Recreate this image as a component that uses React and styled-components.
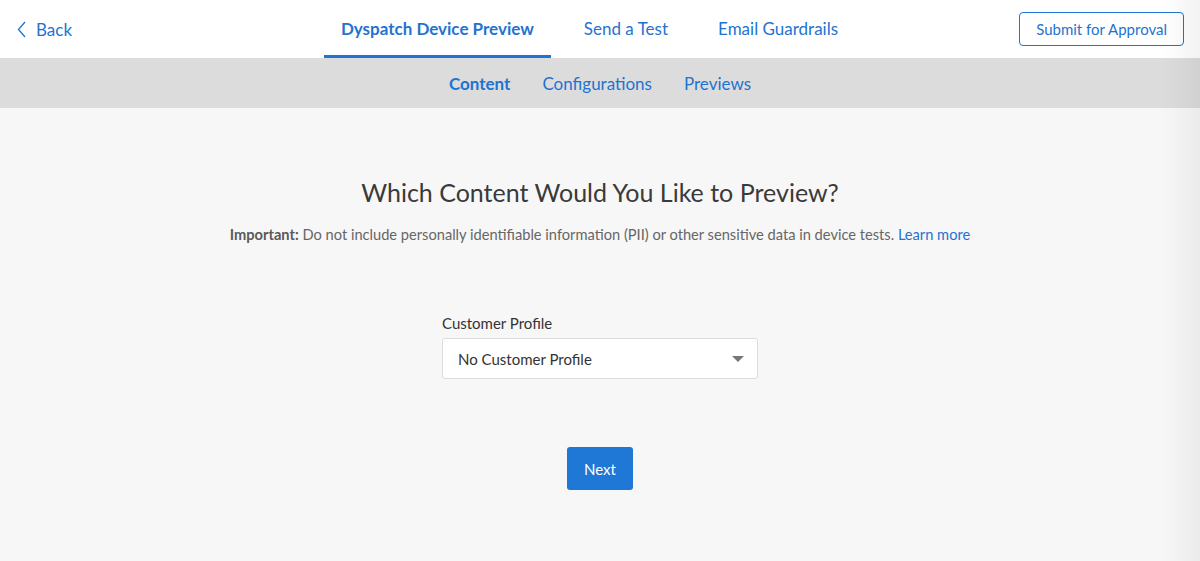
import React from "react";
import styled, { createGlobalStyle } from "styled-components";

const Global = createGlobalStyle`
  html, body { margin: 0; padding: 0; }
  body { font-family: Lato, "Noto Sans", sans-serif; background: #f7f7f7; }
  * { box-sizing: border-box; }
`;

const BLUE = "#1f73d1";

const Page = styled.div`
  position: relative;
  width: 1200px;
  height: 561px;
  background: #f7f7f7;
  overflow: hidden;
`;

const Header = styled.header`
  height: 58px;
  background: #fff;
  display: grid;
  grid-template-columns: 1fr auto 1fr;
  align-items: stretch;
  padding: 0 16px 0 17px;
`;

const BackLink = styled.a`
  display: flex;
  align-items: center;
  gap: 9px;
  color: ${BLUE};
  font-size: 17px;
  text-decoration: none;
  justify-self: start;
`;

const Tabs = styled.nav`
  display: flex;
  gap: 16px;
  align-items: stretch;
  margin-right: 22px;
`;

const Tab = styled.a`
  display: flex;
  align-items: center;
  padding: 2px 17px 0;
  font-size: 17px;
  color: ${BLUE};
  font-weight: ${(p) => (p.$active ? 700 : 400)};
  border-bottom: 3px solid ${(p) => (p.$active ? BLUE : "transparent")};
  text-decoration: none;
  white-space: nowrap;
`;

const Right = styled.div`
  display: flex;
  align-items: center;
  justify-content: flex-end;
`;

const OutlineButton = styled.button`
  height: 34px;
  padding: 0 16px;
  border: 1px solid ${BLUE};
  border-radius: 4px;
  background: #fff;
  color: ${BLUE};
  font-family: Lato, sans-serif;
  font-size: 15px;
  margin-top: -1px;
`;

const SubNav = styled.nav`
  height: 50px;
  background: #dcdcdc;
  display: flex;
  justify-content: center;
  align-items: center;
  gap: 32px;
`;

const SubTab = styled.a`
  font-size: 17px;
  color: ${BLUE};
  font-weight: ${(p) => (p.$active ? 700 : 400)};
  text-decoration: none;
`;

const Main = styled.main`
  display: flex;
  flex-direction: column;
  align-items: center;
  padding-top: 69px;
`;

const Title = styled.h1`
  margin: 0;
  font-size: 25px;
  font-weight: 400;
  color: #3a3a3a;
`;

const Note = styled.p`
  margin: 19px 0 0;
  font-size: 14.65px;
  color: #666;
  strong { font-weight: 700; color: #5a5a5a; }
  a { color: ${BLUE}; text-decoration: none; }
`;

const Field = styled.div`
  margin-top: 71px;
  width: 316px;
  display: flex;
  flex-direction: column;
  gap: 6px;
`;

const Label = styled.label`
  font-size: 15px;
  color: #333;
`;

const Select = styled.div`
  height: 41px;
  background: #fff;
  border: 1px solid #dcdcdc;
  border-radius: 3px;
  display: flex;
  align-items: center;
  justify-content: space-between;
  padding: 0 13px 0 15px;
  font-size: 15px;
  color: #333;
`;

const Caret = styled.span`
  width: 0;
  height: 0;
  border-left: 6px solid transparent;
  border-right: 6px solid transparent;
  border-top: 6px solid #777;
`;

const PrimaryButton = styled.button`
  margin-top: 68px;
  height: 43px;
  padding: 0 17px;
  background: #1f77d6;
  color: #fff;
  border: none;
  border-radius: 3px;
  font-family: Lato, sans-serif;
  font-size: 15px;
`;

const EdgeShade = styled.div`
  position: absolute;
  top: 0;
  right: 0;
  width: 42px;
  height: 100%;
  pointer-events: none;
  background: linear-gradient(to right, rgba(0,0,0,0) 0%, rgba(0,0,0,0.015) 40%, rgba(0,0,0,0.05) 100%);
`;

export default function App() {
  return (
    <Page>
      <Global />
      <Header>
        <BackLink href="#">
          <svg width="10" height="17" viewBox="0 0 10 17">
            <path d="M8 1 L1.5 8.5 L8 16" fill="none" stroke={BLUE} strokeWidth="1.3" />
          </svg>
          Back
        </BackLink>
        <Tabs>
          <Tab $active href="#">Dyspatch Device Preview</Tab>
          <Tab href="#">Send a Test</Tab>
          <Tab href="#">Email Guardrails</Tab>
        </Tabs>
        <Right>
          <OutlineButton>Submit for Approval</OutlineButton>
        </Right>
      </Header>
      <SubNav>
        <SubTab $active href="#">Content</SubTab>
        <SubTab href="#">Configurations</SubTab>
        <SubTab href="#">Previews</SubTab>
      </SubNav>
      <Main>
        <Title>Which Content Would You Like to Preview?</Title>
        <Note>
          <strong>Important:</strong> Do not include personally identifiable information (PII) or other sensitive data in device tests. <a href="#">Learn more</a>
        </Note>
        <Field>
          <Label>Customer Profile</Label>
          <Select>
            No Customer Profile
            <Caret />
          </Select>
        </Field>
        <PrimaryButton>Next</PrimaryButton>
      </Main>
      <EdgeShade />
    </Page>
  );
}
